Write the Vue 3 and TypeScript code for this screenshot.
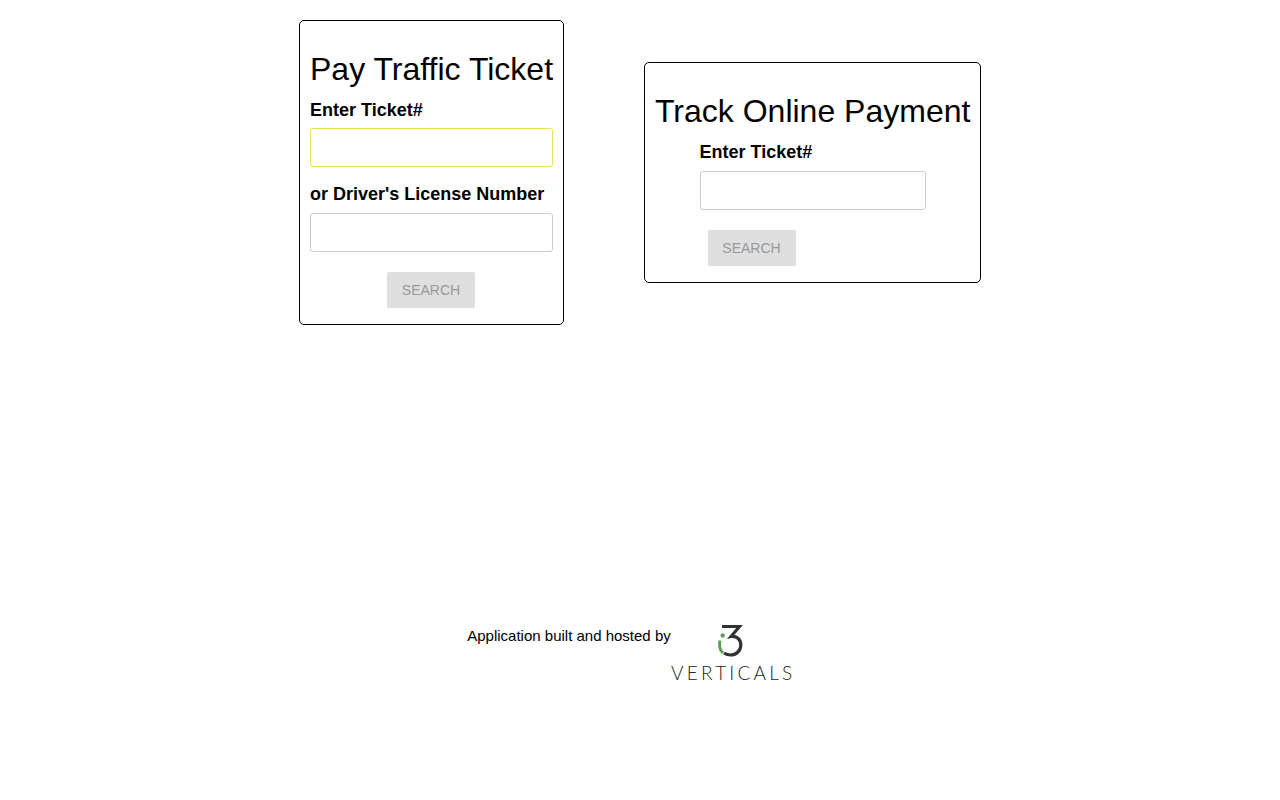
<script setup lang="ts">
const title1: string = 'Pay Traffic Ticket'
const title2: string = 'Track Online Payment'
</script>

<template>
  <div class="page">
    <main class="cards">
      <section class="card card-pay">
        <h2>{{ title1 }}</h2>
        <label for="t1">Enter Ticket#</label>
        <input id="t1" class="input focus" type="text" />
        <label for="d1" class="second">or Driver's License Number</label>
        <input id="d1" class="input" type="text" />
        <div class="actions center">
          <button type="button" disabled>SEARCH</button>
        </div>
      </section>
      <section class="card card-track">
        <h2>{{ title2 }}</h2>
        <div class="narrow">
          <label for="t2">Enter Ticket#</label>
          <input id="t2" class="input" type="text" />
          <div class="actions inset">
            <button type="button" disabled>SEARCH</button>
          </div>
        </div>
      </section>
    </main>
    <footer class="footer">
      <span class="built">Application built and hosted by</span>
      <div class="logo">
        <svg class="mark" width="28" height="34" viewBox="0 0 28 34" aria-hidden="true">
          <path d="M4 1.5H21.5L13 11.5C18.5 10.5 22.8 14.5 22.8 20C22.8 26 18 30 12.5 30C10 30 7.5 29 6 28" fill="none" stroke="#2f3331" stroke-width="3.2" />
          <circle cx="4.7" cy="10.5" r="2.2" fill="#5c9e5a" />
          <path d="M2 15.5C1 20 2 25 5 28" fill="none" stroke="#5c9e5a" stroke-width="3" />
        </svg>
        <span class="verticals">VERTICALS</span>
      </div>
    </footer>
  </div>
</template>

<style scoped>
.page {
  font-family: "Liberation Sans", Arial, sans-serif;
  color: #000;
  min-height: 800px;
}
.cards {
  display: flex;
  justify-content: center;
  align-items: flex-start;
  gap: 80px;
}
.card {
  box-sizing: border-box;
  border: 1px solid #000;
  border-radius: 5px;
  padding: 10px;
  background: #fff;
}
.card-pay {
  width: 265px;
  height: 305px;
  margin-top: 20px;
}
.card-track {
  width: 337px;
  height: 221px;
  margin-top: 62px;
}
h2 {
  margin: 20px 0 0;
  font-size: 32px;
  line-height: 37px;
  font-weight: 400;
  white-space: nowrap;
}
label {
  display: block;
  margin-top: 12px;
  font-size: 18px;
  line-height: 20px;
  font-weight: 700;
  white-space: nowrap;
}
.second {
  margin-top: 17px;
}
.input {
  display: block;
  box-sizing: border-box;
  width: 100%;
  height: 39px;
  margin-top: 9px;
  border: 1px solid #ccc;
  border-radius: 3px;
  outline: none;
  background: #fff;
}
.focus {
  margin-top: 8px;
  border-color: #e4e45a;
}
.narrow {
  width: 226px;
  margin: 0 auto;
}
.actions {
  display: flex;
  margin-top: 20px;
}
.center {
  justify-content: center;
  padding-right: 1px;
}
.inset {
  padding-left: 8px;
}
button {
  width: 88px;
  height: 36px;
  padding: 0;
  border: 0;
  border-radius: 2px;
  background: #dfdfdf;
  color: #999;
  font-family: "Liberation Sans", Arial, sans-serif;
  font-size: 14px;
}
.footer {
  display: flex;
  justify-content: center;
  align-items: flex-start;
  margin-top: 300px;
  padding-right: 20px;
}
.built {
  margin-top: 2px;
  font-size: 15px;
  line-height: 18px;
  white-space: nowrap;
}
.logo {
  display: flex;
  flex-direction: column;
  align-items: center;
  width: 122px;
}
.mark {
  display: block;
}
.verticals {
  margin-top: 4px;
  margin-right: -3px;
  font-family: Lato, "Liberation Sans", sans-serif;
  font-weight: 300;
  font-size: 19px;
  line-height: 20px;
  letter-spacing: 3.2px;
  color: #222;
  white-space: nowrap;
}
</style>
